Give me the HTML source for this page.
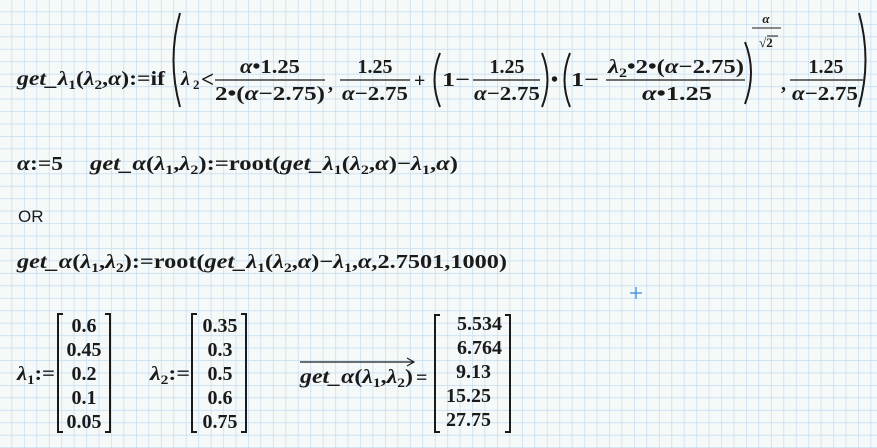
<!DOCTYPE html>
<html><head><meta charset="utf-8"><style>
html,body{margin:0;padding:0;background:#f5f9f8;}
svg{display:block}
text{font-family:"Liberation Serif",serif;font-weight:bold;font-size:20px;fill:#1a1a1a}
.i{font-style:italic}
.s{font-size:13px}
</style></head><body>
<svg width="877" height="448" viewBox="0 0 877 448" xmlns="http://www.w3.org/2000/svg">
<defs>
<pattern id="g" x="11.5" y="11.5" width="12.45" height="12.45" patternUnits="userSpaceOnUse">
<path d="M0 0H12.45M0 0V12.45" stroke="#c3dbf3" stroke-width="1.4" fill="none"/>
</pattern>
</defs>
<rect width="877" height="448" fill="#f5f9f8"/>
<rect width="877" height="448" fill="url(#g)"/>

<g stroke="#1a1a1a" fill="none" stroke-width="2">
<path d="M180 13 Q167 60 180 107"/>
<path d="M859 13 Q872 60 859 107"/>
<path d="M440 53 Q429 80 440 107"/>
<path d="M542 53 Q553 80 542 107"/>
<path d="M570 53 Q559 80 570 107"/>
<path d="M745 42 Q757 72 745 104"/>
</g>
<g stroke="#1a1a1a" stroke-width="1.3">
<line x1="215" y1="80" x2="325" y2="80"/>
<line x1="340" y1="80" x2="410" y2="80"/>
<line x1="473" y1="80" x2="540" y2="80"/>
<line x1="606" y1="80" x2="745" y2="80"/>
<line x1="790" y1="80" x2="863" y2="80"/>
<line x1="752" y1="28" x2="781" y2="28" stroke-width="1"/>
</g>

<text x="17" y="85" textLength="148" lengthAdjust="spacingAndGlyphs"><tspan class="i">get_λ</tspan><tspan class="s" dy="4">1</tspan><tspan dy="-4">(</tspan><tspan class="i">λ</tspan><tspan class="s" dy="4">2</tspan><tspan dy="-4">,</tspan><tspan class="i">α</tspan>):=if</text>
<text x="181" y="85" class="i">λ</text>
<text x="193" y="89" class="s">2</text>
<text x="201" y="87" style="font-size:23px">&lt;</text>
<text x="240" y="73" textLength="60" lengthAdjust="spacingAndGlyphs"><tspan class="i">α</tspan>•1.25</text>
<text x="215" y="100" textLength="110" lengthAdjust="spacingAndGlyphs">2•(<tspan class="i">α</tspan>−2.75)</text>
<text x="328" y="90">,</text>
<text x="375" y="73" text-anchor="middle">1.25</text>
<text x="342" y="100" textLength="66" lengthAdjust="spacingAndGlyphs"><tspan class="i">α</tspan>−2.75</text>
<text x="414" y="87">+</text>
<text x="442" y="86" textLength="28" lengthAdjust="spacingAndGlyphs">1−</text>
<text x="507" y="73" text-anchor="middle">1.25</text>
<text x="474" y="100" textLength="66" lengthAdjust="spacingAndGlyphs"><tspan class="i">α</tspan>−2.75</text>
<text x="551" y="86">•</text>
<text x="571" y="86" textLength="28" lengthAdjust="spacingAndGlyphs">1−</text>
<text x="608" y="73" textLength="136" lengthAdjust="spacingAndGlyphs"><tspan class="i">λ</tspan><tspan class="s" dy="4">2</tspan><tspan dy="-4">•2•(</tspan><tspan class="i">α</tspan>−2.75)</text>
<text x="642" y="100" textLength="70" lengthAdjust="spacingAndGlyphs"><tspan class="i">α</tspan>•1.25</text>
<text x="766" y="23" text-anchor="middle" class="s i">α</text>
<text x="766" y="47" text-anchor="middle" class="s">√2</text>
<line x1="767" y1="36" x2="778" y2="36" stroke="#1a1a1a" stroke-width="1"/>
<text x="781" y="90">,</text>
<text x="826" y="73" text-anchor="middle">1.25</text>
<text x="792" y="100" textLength="66" lengthAdjust="spacingAndGlyphs"><tspan class="i">α</tspan>−2.75</text>

<text x="17" y="170" textLength="46" lengthAdjust="spacingAndGlyphs"><tspan class="i">α</tspan>:=5</text>
<text x="90" y="170" textLength="368" lengthAdjust="spacingAndGlyphs"><tspan class="i">get_α</tspan>(<tspan class="i">λ</tspan><tspan class="s" dy="4">1</tspan><tspan dy="-4">,</tspan><tspan class="i">λ</tspan><tspan class="s" dy="4">2</tspan><tspan dy="-4">):=root(</tspan><tspan class="i">get_λ</tspan><tspan class="s" dy="4">1</tspan><tspan dy="-4">(</tspan><tspan class="i">λ</tspan><tspan class="s" dy="4">2</tspan><tspan dy="-4">,</tspan><tspan class="i">α</tspan>)−<tspan class="i">λ</tspan><tspan class="s" dy="4">1</tspan><tspan dy="-4">,</tspan><tspan class="i">α</tspan>)</text>
<text x="18" y="222" style="font-family:'Liberation Sans',sans-serif;font-weight:normal;font-size:17px">OR</text>
<text x="17" y="268" textLength="490" lengthAdjust="spacingAndGlyphs"><tspan class="i">get_α</tspan>(<tspan class="i">λ</tspan><tspan class="s" dy="4">1</tspan><tspan dy="-4">,</tspan><tspan class="i">λ</tspan><tspan class="s" dy="4">2</tspan><tspan dy="-4">):=root(</tspan><tspan class="i">get_λ</tspan><tspan class="s" dy="4">1</tspan><tspan dy="-4">(</tspan><tspan class="i">λ</tspan><tspan class="s" dy="4">2</tspan><tspan dy="-4">,</tspan><tspan class="i">α</tspan>)−<tspan class="i">λ</tspan><tspan class="s" dy="4">1</tspan><tspan dy="-4">,</tspan><tspan class="i">α</tspan>,2.7501,1000)</text>

<g stroke="#1a1a1a" fill="none" stroke-width="2">
<path d="M63 314H58V432H63"/><path d="M105 314H110V432H105"/>
<path d="M197 314H192V432H197"/><path d="M241 314H246V432H241"/>
<path d="M440 315H435V432H440"/><path d="M505 315H510V432H505"/>
</g>
<text x="17" y="380" textLength="38" lengthAdjust="spacingAndGlyphs"><tspan class="i">λ</tspan><tspan class="s" dy="4">1</tspan><tspan dy="-4">:=</tspan></text>
<g text-anchor="middle">
<text x="84" y="332">0.6</text><text x="84" y="356">0.45</text><text x="84" y="380">0.2</text><text x="84" y="404">0.1</text><text x="84" y="428">0.05</text>
<text x="220" y="332">0.35</text><text x="220" y="356">0.3</text><text x="220" y="380">0.5</text><text x="220" y="404">0.6</text><text x="220" y="428">0.75</text>
</g>
<text x="150" y="380" textLength="40" lengthAdjust="spacingAndGlyphs"><tspan class="i">λ</tspan><tspan class="s" dy="4">2</tspan><tspan dy="-4">:=</tspan></text>

<text x="300" y="383" textLength="113" lengthAdjust="spacingAndGlyphs"><tspan class="i">get_α</tspan>(<tspan class="i">λ</tspan><tspan class="s" dy="4">1</tspan><tspan dy="-4">,</tspan><tspan class="i">λ</tspan><tspan class="s" dy="4">2</tspan><tspan dy="-4">)</tspan></text>
<line x1="300" y1="362" x2="413" y2="362" stroke="#1a1a1a" stroke-width="1.2"/>
<path d="M407 358L414 362L407 366" stroke="#1a1a1a" stroke-width="1.2" fill="none"/>
<text x="416" y="384">=</text>
<g text-anchor="end">
<text x="502" y="330">5.534</text><text x="502" y="354">6.764</text><text x="491" y="378">9.13</text><text x="491" y="402">15.25</text><text x="491" y="426">27.75</text>
</g>

<g stroke="#3b8de0" stroke-width="1.3">
<line x1="630" y1="293" x2="642" y2="293"/><line x1="636" y1="287" x2="636" y2="299"/>
</g>
</svg>
</body></html>
